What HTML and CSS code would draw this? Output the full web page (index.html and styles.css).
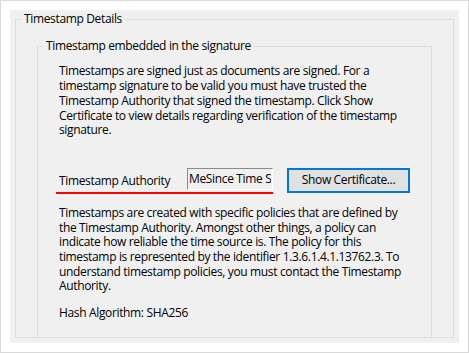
FILE: index.html
```html
<!DOCTYPE html>
<html lang="en">
<head>
    <meta charset="UTF-8">
    <title>Timestamp Details</title>
    <link rel="stylesheet" href="styles.css">
</head>
<body>
    <div class="frame">
        <div class="panel">
            <fieldset class="group outer">
                <legend>Timestamp Details</legend>
                <fieldset class="group inner">
                    <legend>Timestamp embedded in the signature</legend>
                    <div class="group-body">
                        <p class="note">Timestamps are signed just as documents are signed. For a timestamp signature to be valid you must have trusted the Timestamp Authority that signed the timestamp. Click Show Certificate to view details regarding verification of the timestamp signature.</p>

                        <div class="authority-row">
                            <div class="authority-field">
                                <label for="authority">Timestamp Authority</label>
                                <input id="authority" class="readonly-box" type="text" value="MeSince Time Stamping Authority" readonly>
                            </div>
                            <button class="cert-btn">Show Certificate...</button>
                        </div>

                        <p class="note policy">Timestamps are created with specific policies that are defined by the Timestamp Authority. Amongst other things, a policy can indicate how reliable the time source is. The policy for this timestamp is represented by the identifier 1.3.6.1.4.1.13762.3. To understand timestamp policies, you must contact the Timestamp Authority.</p>

                        <p class="note hash">Hash Algorithm: SHA256</p>
                    </div>
                </fieldset>
            </fieldset>
        </div>
    </div>
</body>
</html>
```

FILE: styles.css
```css
* {
    margin: 0;
    padding: 0;
    box-sizing: border-box;
}

body {
    font-family: 'Open Sans', 'Noto Sans', sans-serif;
    font-size: 12px;
    line-height: 14.7px;
    letter-spacing: -0.35px;
    color: #000;
    background: white;
}

.frame {
    width: 469px;
    height: 353px;
    border: 1px solid #dadada;
    padding: 9px;
}

.panel {
    height: 333px;
    background: #f0f0f0;
    padding: 2px 5px 5px;
    display: flex;
}

.group {
    border: 1px solid #dcdcdc;
    min-width: 0;
}

.group legend {
    margin-left: 5px;
    padding: 0 3px;
}

.outer {
    flex: 1;
    display: flex;
    flex-direction: column;
}

.inner {
    flex: 1;
    margin: 12px 21px 0;
    border-bottom: none;
}

.group-body {
    padding: 11px 21px 0;
}

.authority-row {
    display: flex;
    align-items: flex-start;
    justify-content: space-between;
    margin: 30px 0 0 -3px;
}

.authority-field {
    width: 217px;
    display: flex;
    align-items: flex-start;
    justify-content: space-between;
    padding: 0 0 2px 3px;
    border-bottom: 2px solid #ff0000;
}

.authority-field label {
    padding-top: 6px;
}

.readonly-box {
    width: 86px;
    height: 22px;
    font: inherit;
    letter-spacing: inherit;
    color: #000;
    background: #f0f0f0;
    border: 1px solid;
    border-color: #8a8a8a #ffffff #ffffff #8a8a8a;
    padding: 0 1px;
    outline: none;
}

.cert-btn {
    width: 123px;
    height: 25px;
    font: inherit;
    letter-spacing: inherit;
    color: #000;
    background: #e1e1e1;
    border: 2px solid #0078d7;
    cursor: pointer;
}

.policy {
    margin-top: 12px;
}

.hash {
    margin-top: 12px;
}
```
